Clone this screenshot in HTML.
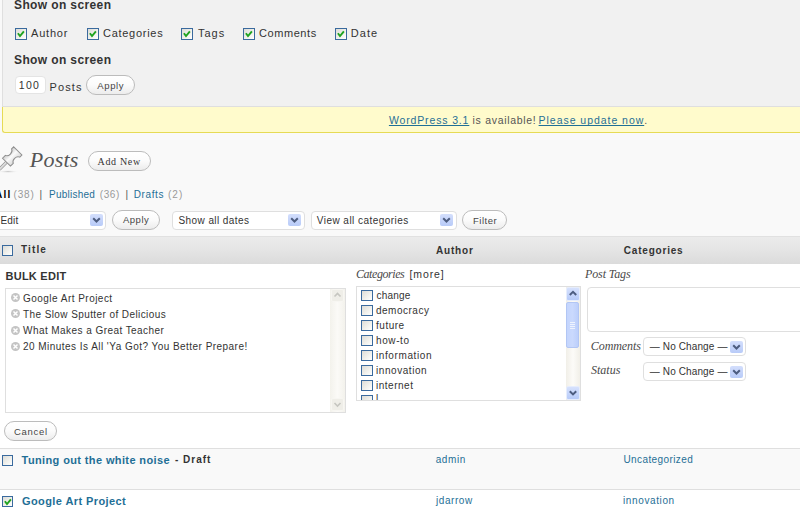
<!DOCTYPE html>
<html><head><meta charset="utf-8">
<style>
html,body{margin:0;padding:0;}
body{width:800px;height:520px;overflow:hidden;position:relative;background:#f9f9f9;font-family:"Liberation Sans",sans-serif;}
.a{position:absolute;box-sizing:border-box;}
.t{position:absolute;white-space:nowrap;line-height:20px;}
.cb{position:absolute;box-sizing:border-box;width:12px;height:11px;border:1px solid #3a6a9e;background:linear-gradient(135deg,#dcdcd7 0%,#f2f2ee 60%,#fff 100%);}
.cb svg{position:absolute;left:1px;top:1px;}
.btn{position:absolute;box-sizing:border-box;border:1px solid #bcbcbc;border-radius:11px;background:linear-gradient(#ffffff 0%,#fbfbfb 50%,#ececec 100%);}
.sel{position:absolute;box-sizing:border-box;border:1px solid #dfdfdf;border-radius:4px;background:#fff;}
.arr{position:absolute;box-sizing:border-box;width:13px;height:12px;border-radius:2px;background:linear-gradient(#d3defc,#b8cbf8);}
.arr svg{position:absolute;left:0;top:0;}
.xi{position:absolute;width:9px;height:9px;}
</style></head><body>
<!-- screen options panel -->
<div class="a" style="left:2px;top:-1px;width:1000px;height:108px;background:#f1f1f1;border-left:1px solid #dfdfdf;border-bottom:1px solid #dfdfdf;"></div>
<!-- checked checkboxes -->
<div class="cb" style="left:15px;top:28px;height:12px"><svg width="10" height="10" viewBox="0 0 10 10"><path d="M0.9 3.2 L3 6 L6.9 1.3" fill="none" stroke="#1fa31f" stroke-width="1.9"/></svg></div>
<div class="cb" style="left:87px;top:28px;height:12px"><svg width="10" height="10" viewBox="0 0 10 10"><path d="M0.9 3.2 L3 6 L6.9 1.3" fill="none" stroke="#1fa31f" stroke-width="1.9"/></svg></div>
<div class="cb" style="left:181px;top:28px;height:12px"><svg width="10" height="10" viewBox="0 0 10 10"><path d="M0.9 3.2 L3 6 L6.9 1.3" fill="none" stroke="#1fa31f" stroke-width="1.9"/></svg></div>
<div class="cb" style="left:243px;top:28px;height:12px"><svg width="10" height="10" viewBox="0 0 10 10"><path d="M0.9 3.2 L3 6 L6.9 1.3" fill="none" stroke="#1fa31f" stroke-width="1.9"/></svg></div>
<div class="cb" style="left:335px;top:28px;height:12px"><svg width="10" height="10" viewBox="0 0 10 10"><path d="M0.9 3.2 L3 6 L6.9 1.3" fill="none" stroke="#1fa31f" stroke-width="1.9"/></svg></div>
<!-- per page input -->
<div class="a" style="left:15px;top:76px;width:31px;height:18px;background:#fff;border:1px solid #e4e4e4;border-radius:4px;"></div>
<div class="btn" style="left:86px;top:75px;width:49px;height:20px;"></div>
<!-- update nag -->
<div class="a" style="left:2px;top:107px;width:1000px;height:26px;background:#fffbcc;border-left:1px solid #e6db55;border-bottom:1px solid #e6db55;border-bottom-left-radius:3px;"></div>
<!-- pushpin icon -->
<svg class="a" style="left:-4px;top:142px" width="32" height="34" viewBox="0 0 32 34">
 <defs><linearGradient id="pg" x1="0" x2="1" y1="0" y2="0"><stop offset="0" stop-color="#cfcfcf"/><stop offset="0.45" stop-color="#fafafa"/><stop offset="1" stop-color="#d9d9d9"/></linearGradient>
 <radialGradient id="sh" cx="0.5" cy="0.5" r="0.5"><stop offset="0" stop-color="#c8c8c8"/><stop offset="1" stop-color="#f9f9f9" stop-opacity="0"/></radialGradient></defs>
 <ellipse cx="12" cy="29.6" rx="11" ry="1.6" fill="url(#sh)"/>
 <g transform="translate(10.5,20.2) rotate(45)">
  <rect x="-1.3" y="-1" width="2.6" height="11.5" fill="#dadada" stroke="#8f8f8f" stroke-width="0.8"/>
  <path d="M-5.8,-16 L5.8,-16 L5.8,-13 Q3,-12 3,-8.5 Q3,-5 5.6,-4 L5.6,0 L-5.6,0 L-5.6,-4 Q-3,-5 -3,-8.5 Q-3,-12 -5.8,-13 Z" fill="url(#pg)" stroke="#8e8e8e" stroke-width="1"/>
 </g>
</svg>
<div class="btn" style="left:88px;top:151px;width:63px;height:20px;border-radius:10px;"></div>
<!-- selects row -->
<div class="sel" style="left:-20px;top:211px;width:126px;height:19px;"></div>
<div class="arr" style="left:90px;top:214px"><svg width="13" height="12" viewBox="0 0 13 12"><path d="M3.2 4.2 L6.5 7.5 L9.8 4.2" fill="none" stroke="#4d5d80" stroke-width="2"/></svg></div>
<div class="btn" style="left:112px;top:210px;width:48px;height:20px;"></div>
<div class="sel" style="left:172px;top:211px;width:133px;height:19px;"></div>
<div class="arr" style="left:288px;top:214px"><svg width="13" height="12" viewBox="0 0 13 12"><path d="M3.2 4.2 L6.5 7.5 L9.8 4.2" fill="none" stroke="#4d5d80" stroke-width="2"/></svg></div>
<div class="sel" style="left:311px;top:211px;width:146px;height:19px;"></div>
<div class="arr" style="left:440px;top:214px"><svg width="13" height="12" viewBox="0 0 13 12"><path d="M3.2 4.2 L6.5 7.5 L9.8 4.2" fill="none" stroke="#4d5d80" stroke-width="2"/></svg></div>
<div class="btn" style="left:462px;top:210px;width:45px;height:20px;"></div>
<!-- table header -->
<div class="a" style="left:-1px;top:236px;width:1000px;height:28px;border-top:1px solid #e1e1e1;background:linear-gradient(#ebebeb 0%,#e6e6e6 40%,#dbdbdb 100%);"></div>
<div class="cb" style="left:2px;top:245px;width:11px"></div>
<!-- bulk edit row -->
<div class="a" style="left:-1px;top:264px;width:1000px;height:185px;background:#fff;border-bottom:1px solid #dfdfdf;"></div>
<!-- bulk titles textarea -->
<div class="a" style="left:5px;top:288px;width:341px;height:125px;border:1px solid #dfdfdf;background:#fff;"></div>
<div class="a" style="left:330px;top:289px;width:15px;height:123px;background:linear-gradient(90deg,#f3f2ec,#fbfaf7 50%,#f3f2ec);"></div>
<div class="a" style="left:331px;top:289px;width:13px;height:13px;background:#efeee8;border:1px solid #f7f6f2;border-radius:2px;"><svg width="11" height="11" viewBox="0 0 11 11" style="position:absolute;left:0;top:0"><path d="M2.5 6.5 L5.5 3.5 L8.5 6.5" fill="none" stroke="#c6c6c0" stroke-width="1.6"/></svg></div>
<div class="a" style="left:331px;top:398px;width:13px;height:13px;background:#efeee8;border:1px solid #f7f6f2;border-radius:2px;"><svg width="11" height="11" viewBox="0 0 11 11" style="position:absolute;left:0;top:0"><path d="M2.5 4 L5.5 7 L8.5 4" fill="none" stroke="#c6c6c0" stroke-width="1.6"/></svg></div>
<!-- delete icons -->
<svg class="xi" style="left:11px;top:292.5px" viewBox="0 0 9 9"><circle cx="4.5" cy="4.5" r="4.5" fill="#c4c4c4"/><path d="M2.5 2.5 L6.5 6.5 M6.5 2.5 L2.5 6.5" stroke="#fff" stroke-width="1.5"/></svg>
<svg class="xi" style="left:11px;top:309px" viewBox="0 0 9 9"><circle cx="4.5" cy="4.5" r="4.5" fill="#c4c4c4"/><path d="M2.5 2.5 L6.5 6.5 M6.5 2.5 L2.5 6.5" stroke="#fff" stroke-width="1.5"/></svg>
<svg class="xi" style="left:11px;top:325.5px" viewBox="0 0 9 9"><circle cx="4.5" cy="4.5" r="4.5" fill="#c4c4c4"/><path d="M2.5 2.5 L6.5 6.5 M6.5 2.5 L2.5 6.5" stroke="#fff" stroke-width="1.5"/></svg>
<svg class="xi" style="left:11px;top:341.5px" viewBox="0 0 9 9"><circle cx="4.5" cy="4.5" r="4.5" fill="#c4c4c4"/><path d="M2.5 2.5 L6.5 6.5 M6.5 2.5 L2.5 6.5" stroke="#fff" stroke-width="1.5"/></svg>
<!-- categories checklist -->
<div class="a" style="left:356px;top:286px;width:225px;height:115px;border:1px solid #dfdfdf;background:#fff;overflow:hidden;">
 <div class="cb" style="left:4px;top:3px"></div>
 <div class="cb" style="left:4px;top:18px"></div>
 <div class="cb" style="left:4px;top:33px"></div>
 <div class="cb" style="left:4px;top:48px"></div>
 <div class="cb" style="left:4px;top:63px"></div>
 <div class="cb" style="left:4px;top:78px"></div>
 <div class="cb" style="left:4px;top:93px"></div>
 <div class="cb" style="left:4px;top:108px"></div>
 <div class="t" style="left:19px;top:102px;font-size:10px;color:#333">l</div>
</div>
<div class="a" style="left:566px;top:287px;width:14px;height:113px;background:linear-gradient(90deg,#f1efe8,#fcfbf8 50%,#f1efe8);"></div>
<div class="a" style="left:566px;top:287px;width:14px;height:14px;border-radius:2px;background:linear-gradient(#d6e1fd,#b7cbf9);border:1px solid #e6edfc;"><svg width="12" height="12" viewBox="0 0 12 12" style="position:absolute;left:0;top:0"><path d="M2.8 7 L6 3.8 L9.2 7" fill="none" stroke="#4d5d80" stroke-width="2"/></svg></div>
<div class="a" style="left:566px;top:302px;width:13px;height:46px;border-radius:2px;background:linear-gradient(90deg,#c4d5fd,#cad9fd 50%,#bccffb);border:1px solid #b2c6f4;"><svg width="11" height="44" viewBox="0 0 11 44" style="position:absolute;left:0;top:0"><path d="M3 19.5 H8 M3 21.5 H8 M3 23.5 H8 M3 25.5 H8" stroke="#eef3fe" stroke-width="1"/></svg></div>
<div class="a" style="left:566px;top:386px;width:14px;height:14px;border-radius:2px;background:linear-gradient(#d6e1fd,#b7cbf9);border:1px solid #e6edfc;"><svg width="12" height="12" viewBox="0 0 12 12" style="position:absolute;left:0;top:0"><path d="M2.8 4.2 L6 7.4 L9.2 4.2" fill="none" stroke="#4d5d80" stroke-width="2"/></svg></div>
<!-- tags textarea -->
<div class="a" style="left:587px;top:287px;width:300px;height:45px;border:1px solid #dfdfdf;border-radius:4px;background:#fff;"></div>
<!-- comments / status selects -->
<div class="sel" style="left:643px;top:337px;width:103px;height:19px;"></div>
<div class="arr" style="left:730px;top:341px"><svg width="13" height="12" viewBox="0 0 13 12"><path d="M3.2 4.2 L6.5 7.5 L9.8 4.2" fill="none" stroke="#4d5d80" stroke-width="2"/></svg></div>
<div class="sel" style="left:643px;top:362px;width:103px;height:19px;"></div>
<div class="arr" style="left:730px;top:366px"><svg width="13" height="12" viewBox="0 0 13 12"><path d="M3.2 4.2 L6.5 7.5 L9.8 4.2" fill="none" stroke="#4d5d80" stroke-width="2"/></svg></div>
<!-- cancel -->
<div class="btn" style="left:4px;top:421px;width:53px;height:20px;"></div>
<!-- rows -->
<div class="a" style="left:-1px;top:449px;width:1000px;height:41px;background:#f9f9f9;border-bottom:1px solid #dfdfdf;"></div>
<div class="a" style="left:-1px;top:490px;width:1000px;height:40px;background:#fff;"></div>
<div class="cb" style="left:2px;top:455px;width:11px"></div>
<div class="cb" style="left:2px;top:496px;width:11px"><svg width="10" height="10" viewBox="0 0 10 10"><path d="M0.9 3.2 L3 6 L6.9 1.3" fill="none" stroke="#1fa31f" stroke-width="1.9"/></svg></div>
<div class="t" style="left:14.0px;top:-5px;color:#333;letter-spacing:0.38px;font-family:'Liberation Sans',sans-serif;font-size:12px;font-weight:bold;font-style:normal;">Show on screen</div>
<div class="t" style="left:31.0px;top:23px;color:#333;letter-spacing:0.80px;font-family:'Liberation Sans',sans-serif;font-size:11px;font-weight:normal;font-style:normal;">Author</div>
<div class="t" style="left:103.0px;top:23px;color:#333;letter-spacing:0.72px;font-family:'Liberation Sans',sans-serif;font-size:11px;font-weight:normal;font-style:normal;">Categories</div>
<div class="t" style="left:198.0px;top:23px;color:#333;letter-spacing:1.00px;font-family:'Liberation Sans',sans-serif;font-size:11px;font-weight:normal;font-style:normal;">Tags</div>
<div class="t" style="left:259.0px;top:23px;color:#333;letter-spacing:0.57px;font-family:'Liberation Sans',sans-serif;font-size:11px;font-weight:normal;font-style:normal;">Comments</div>
<div class="t" style="left:350.8px;top:23px;color:#333;letter-spacing:1.07px;font-family:'Liberation Sans',sans-serif;font-size:11px;font-weight:normal;font-style:normal;">Date</div>
<div class="t" style="left:14.0px;top:50px;color:#333;letter-spacing:0.38px;font-family:'Liberation Sans',sans-serif;font-size:12px;font-weight:bold;font-style:normal;">Show on screen</div>
<div class="t" style="left:18.8px;top:75px;color:#333;letter-spacing:1.25px;font-family:'Liberation Sans',sans-serif;font-size:10.5px;font-weight:normal;font-style:normal;">100</div>
<div class="t" style="left:49.6px;top:77px;color:#333;letter-spacing:1.10px;font-family:'Liberation Sans',sans-serif;font-size:11px;font-weight:normal;font-style:normal;">Posts</div>
<div class="t" style="left:97.3px;top:76px;color:#464646;letter-spacing:0.62px;font-family:'Liberation Sans',sans-serif;font-size:9.5px;font-weight:normal;font-style:normal;">Apply</div>
<div class="t" style="left:388.9px;top:110px;color:#1f6f96;letter-spacing:0.86px;font-family:'Liberation Sans',sans-serif;font-size:10.5px;font-weight:normal;font-style:normal;text-decoration:underline;text-decoration-skip-ink:none;text-underline-offset:1px;">WordPress 3.1</div>
<div class="t" style="left:472.6px;top:110px;color:#555;letter-spacing:0.69px;font-family:'Liberation Sans',sans-serif;font-size:10.5px;font-weight:normal;font-style:normal;">is available!</div>
<div class="t" style="left:538.6px;top:110px;color:#1f6f96;letter-spacing:0.96px;font-family:'Liberation Sans',sans-serif;font-size:10.5px;font-weight:normal;font-style:normal;text-decoration:underline;text-decoration-skip-ink:none;text-underline-offset:1px;">Please update now</div>
<div class="t" style="left:644.2px;top:110px;color:#555;letter-spacing:0.00px;font-family:'Liberation Sans',sans-serif;font-size:10.5px;font-weight:normal;font-style:normal;">.</div>
<div class="t" style="left:29.8px;top:150px;color:#555;letter-spacing:0.20px;font-family:'Liberation Serif',sans-serif;font-size:22px;font-weight:normal;font-style:italic;">Posts</div>
<div class="t" style="left:97.5px;top:152px;color:#333;letter-spacing:0.67px;font-family:'Liberation Serif',sans-serif;font-size:10px;font-weight:normal;font-style:normal;">Add New</div>
<div class="t" style="left:-5.0px;top:185px;color:#000;letter-spacing:1.25px;font-family:'Liberation Sans',sans-serif;font-size:10px;font-weight:bold;font-style:normal;">All</div>
<div class="t" style="left:13.5px;top:185px;color:#999;letter-spacing:0.83px;font-family:'Liberation Sans',sans-serif;font-size:10px;font-weight:normal;font-style:normal;">(38)</div>
<div class="t" style="left:39.5px;top:185px;color:#555;letter-spacing:0.00px;font-family:'Liberation Sans',sans-serif;font-size:10px;font-weight:normal;font-style:normal;">|</div>
<div class="t" style="left:49.0px;top:185px;color:#1f6f96;letter-spacing:0.25px;font-family:'Liberation Sans',sans-serif;font-size:10px;font-weight:normal;font-style:normal;">Published</div>
<div class="t" style="left:99.8px;top:185px;color:#999;letter-spacing:0.55px;font-family:'Liberation Sans',sans-serif;font-size:10px;font-weight:normal;font-style:normal;">(36)</div>
<div class="t" style="left:125.5px;top:185px;color:#555;letter-spacing:0.00px;font-family:'Liberation Sans',sans-serif;font-size:10px;font-weight:normal;font-style:normal;">|</div>
<div class="t" style="left:133.8px;top:185px;color:#1f6f96;letter-spacing:0.60px;font-family:'Liberation Sans',sans-serif;font-size:10px;font-weight:normal;font-style:normal;">Drafts</div>
<div class="t" style="left:168.0px;top:185px;color:#999;letter-spacing:1.00px;font-family:'Liberation Sans',sans-serif;font-size:10px;font-weight:normal;font-style:normal;">(2)</div>
<div class="t" style="left:0.5px;top:211px;color:#333;letter-spacing:0.17px;font-family:'Liberation Sans',sans-serif;font-size:10px;font-weight:normal;font-style:normal;">Edit</div>
<div class="t" style="left:122.9px;top:210px;color:#464646;letter-spacing:0.55px;font-family:'Liberation Sans',sans-serif;font-size:9.5px;font-weight:normal;font-style:normal;">Apply</div>
<div class="t" style="left:178.5px;top:211px;color:#333;letter-spacing:0.42px;font-family:'Liberation Sans',sans-serif;font-size:10px;font-weight:normal;font-style:normal;">Show all dates</div>
<div class="t" style="left:316.8px;top:211px;color:#333;letter-spacing:0.46px;font-family:'Liberation Sans',sans-serif;font-size:10px;font-weight:normal;font-style:normal;">View all categories</div>
<div class="t" style="left:473.0px;top:211px;color:#464646;letter-spacing:0.52px;font-family:'Liberation Sans',sans-serif;font-size:9.5px;font-weight:normal;font-style:normal;">Filter</div>
<div class="t" style="left:21.0px;top:240px;color:#333;letter-spacing:1.12px;font-family:'Liberation Sans',sans-serif;font-size:10px;font-weight:bold;font-style:normal;">Title</div>
<div class="t" style="left:436.0px;top:241px;color:#333;letter-spacing:0.80px;font-family:'Liberation Sans',sans-serif;font-size:10px;font-weight:bold;font-style:normal;">Author</div>
<div class="t" style="left:623.8px;top:241px;color:#333;letter-spacing:0.80px;font-family:'Liberation Sans',sans-serif;font-size:10px;font-weight:bold;font-style:normal;">Categories</div>
<div class="t" style="left:5.5px;top:266px;color:#333;letter-spacing:0.25px;font-family:'Liberation Sans',sans-serif;font-size:11px;font-weight:bold;font-style:normal;">BULK EDIT</div>
<div class="t" style="left:23.0px;top:289px;color:#333;letter-spacing:0.47px;font-family:'Liberation Sans',sans-serif;font-size:10px;font-weight:normal;font-style:normal;">Google Art Project</div>
<div class="t" style="left:23.0px;top:305px;color:#333;letter-spacing:0.41px;font-family:'Liberation Sans',sans-serif;font-size:10px;font-weight:normal;font-style:normal;">The Slow Sputter of Delicious</div>
<div class="t" style="left:23.0px;top:321px;color:#333;letter-spacing:0.44px;font-family:'Liberation Sans',sans-serif;font-size:10px;font-weight:normal;font-style:normal;">What Makes a Great Teacher</div>
<div class="t" style="left:23.0px;top:337px;color:#333;letter-spacing:0.46px;font-family:'Liberation Sans',sans-serif;font-size:10px;font-weight:normal;font-style:normal;">20 Minutes Is All 'Ya Got? You Better Prepare!</div>
<div class="t" style="left:356.0px;top:264px;color:#4a4a4a;letter-spacing:-0.44px;font-family:'Liberation Serif',sans-serif;font-size:12px;font-weight:normal;font-style:italic;">Categories</div>
<div class="t" style="left:409.5px;top:264px;color:#333;letter-spacing:0.90px;font-family:'Liberation Sans',sans-serif;font-size:10.5px;font-weight:normal;font-style:normal;">[more]</div>
<div class="t" style="left:376.6px;top:286px;color:#333;letter-spacing:0.16px;font-family:'Liberation Sans',sans-serif;font-size:10px;font-weight:normal;font-style:normal;">change</div>
<div class="t" style="left:376.0px;top:301px;color:#333;letter-spacing:0.50px;font-family:'Liberation Sans',sans-serif;font-size:10px;font-weight:normal;font-style:normal;">democracy</div>
<div class="t" style="left:376.0px;top:316px;color:#333;letter-spacing:0.52px;font-family:'Liberation Sans',sans-serif;font-size:10px;font-weight:normal;font-style:normal;">future</div>
<div class="t" style="left:376.0px;top:331px;color:#333;letter-spacing:0.60px;font-family:'Liberation Sans',sans-serif;font-size:10px;font-weight:normal;font-style:normal;">how-to</div>
<div class="t" style="left:376.0px;top:346px;color:#333;letter-spacing:0.60px;font-family:'Liberation Sans',sans-serif;font-size:10px;font-weight:normal;font-style:normal;">information</div>
<div class="t" style="left:376.0px;top:361px;color:#333;letter-spacing:0.56px;font-family:'Liberation Sans',sans-serif;font-size:10px;font-weight:normal;font-style:normal;">innovation</div>
<div class="t" style="left:376.0px;top:376px;color:#333;letter-spacing:0.51px;font-family:'Liberation Sans',sans-serif;font-size:10px;font-weight:normal;font-style:normal;">internet</div>
<div class="t" style="left:585.0px;top:264px;color:#4a4a4a;letter-spacing:-0.12px;font-family:'Liberation Serif',sans-serif;font-size:12px;font-weight:normal;font-style:italic;">Post Tags</div>
<div class="t" style="left:590.8px;top:336px;color:#4a4a4a;letter-spacing:-0.07px;font-family:'Liberation Serif',sans-serif;font-size:12px;font-weight:normal;font-style:italic;">Comments</div>
<div class="t" style="left:649.8px;top:337px;color:#333;letter-spacing:0.12px;font-family:'Liberation Sans',sans-serif;font-size:10px;font-weight:normal;font-style:normal;">— No Change —</div>
<div class="t" style="left:591.0px;top:360px;color:#4a4a4a;letter-spacing:0.00px;font-family:'Liberation Serif',sans-serif;font-size:12px;font-weight:normal;font-style:italic;">Status</div>
<div class="t" style="left:649.8px;top:362px;color:#333;letter-spacing:0.12px;font-family:'Liberation Sans',sans-serif;font-size:10px;font-weight:normal;font-style:normal;">— No Change —</div>
<div class="t" style="left:14.0px;top:422px;color:#464646;letter-spacing:0.70px;font-family:'Liberation Sans',sans-serif;font-size:9.5px;font-weight:normal;font-style:normal;">Cancel</div>
<div class="t" style="left:21.6px;top:450px;color:#1f6f96;letter-spacing:0.38px;font-family:'Liberation Sans',sans-serif;font-size:11px;font-weight:bold;font-style:normal;">Tuning out the white noise</div>
<div class="t" style="left:175.0px;top:450px;color:#333;letter-spacing:1.00px;font-family:'Liberation Sans',sans-serif;font-size:10px;font-weight:bold;font-style:normal;">- Draft</div>
<div class="t" style="left:435.7px;top:450px;color:#1f6f96;letter-spacing:0.58px;font-family:'Liberation Sans',sans-serif;font-size:10px;font-weight:normal;font-style:normal;">admin</div>
<div class="t" style="left:623.4px;top:450px;color:#1f6f96;letter-spacing:0.41px;font-family:'Liberation Sans',sans-serif;font-size:10px;font-weight:normal;font-style:normal;">Uncategorized</div>
<div class="t" style="left:22.0px;top:491px;color:#1f6f96;letter-spacing:0.41px;font-family:'Liberation Sans',sans-serif;font-size:11px;font-weight:bold;font-style:normal;">Google Art Project</div>
<div class="t" style="left:436.0px;top:491px;color:#1f6f96;letter-spacing:0.57px;font-family:'Liberation Sans',sans-serif;font-size:10px;font-weight:normal;font-style:normal;">jdarrow</div>
<div class="t" style="left:623.0px;top:491px;color:#1f6f96;letter-spacing:0.62px;font-family:'Liberation Sans',sans-serif;font-size:10px;font-weight:normal;font-style:normal;">innovation</div>
</body></html>
